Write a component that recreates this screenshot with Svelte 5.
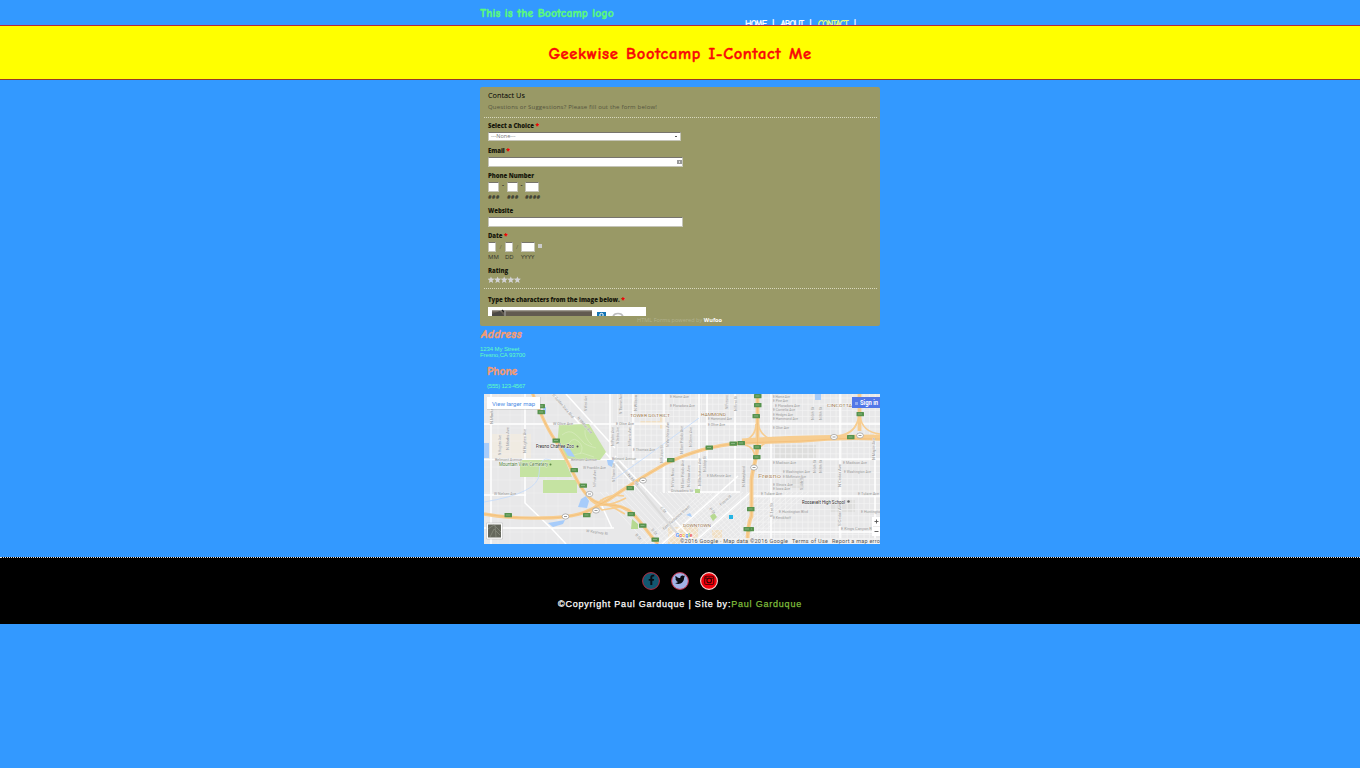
<script>
  // [x, y, text, width, rotation]
  const labels = [
    [553, 425, 'W Olive Ave', 20], [571, 460.5, 'Belmont Avenue', 26], [495, 461, 'Belmont Avenue', 27],
    [583, 469, 'W Franklin Ave', 23], [494, 495, 'W Nielsen Ave', 22], [586, 532, 'W Kearney Bl', 22, 8],
    [616, 425, 'E Olive Ave', 18], [670, 398, 'E Home Ave', 19], [670, 406.5, 'E Floradora Ave', 25],
    [633, 451, 'E Thomas Ave', 22], [612, 460, 'Belmont Avenue', 24], [708, 420, 'E Hammond Ave', 24],
    [708, 426, 'E Olive Ave', 17], [707, 477, 'E McKenzie Ave', 24], [671, 492, 'Divisadero St', 22],
    [773, 398, 'E Home Ave', 17], [773, 402, 'E Pine Ave', 15], [775, 407, 'E Floradora Ave', 25],
    [773, 411, 'E Cornelia Ave', 22], [773, 416, 'E Hedges Ave', 20], [773, 420, 'E Hammond Ave', 25],
    [773, 429, 'E Olive Ave', 16], [773, 464, 'E Madison Ave', 23], [783, 473, 'E Washington Ave', 27],
    [783, 477.5, 'E McKenzie Ave', 23], [773, 486, 'E Illinois Ave', 20], [773, 490, 'E Iowa Ave', 17],
    [761, 495, 'E Tulare Ave', 21], [843, 464, 'E Madison Ave', 24], [844, 473, 'E Washington Ave', 27],
    [858, 495, 'E Tulare Ave', 21], [779, 513, 'E Huntington Blvd', 29], [773, 519, 'E Kerckhoff', 18],
    [861, 513, 'E Huntington', 21], [841, 530, 'E Kings Canyon Rd', 33],
    [501, 455, 'N Hughes Ave', 20, -90], [509, 450, 'N Marks Ave', 23, -90], [526, 453, 'N Hughes Ave', 24, -90],
    [493, 424, 'N Marks', 16, -90], [552, 395, 'W Golden State Blvd', 31, 49], [577, 418, 'N Weber Ave', 21, 49],
    [587, 411, 'N West Ave', 15, -90], [614, 446, 'N Palm Ave', 19, -90], [596, 487, 'N Fruit Ave', 17, -90],
    [615, 482, 'N Thorne Ave', 19, -90], [622, 414, 'N Thorne Ave', 20, -90], [637, 411, 'N Wilson', 16, -90],
    [619, 444, 'N Delno Ave', 17, -90], [631, 446, 'N Farris Ave', 19, -90], [669, 447, 'N Van Ness Ave', 25, -90],
    [663, 463, 'N Fulton St', 18, -90], [683, 454, 'N San Pablo Ave', 28, -90], [692, 447, 'N Glenn Ave', 20, -90],
    [674, 487, 'N Van Ness', 19, -90], [684, 488, 'N San Pablo Ave', 28, -90], [690, 487, 'N Glenn Ave', 22, -90],
    [701, 486, 'N Blackstone Ave', 28, -90], [706, 472, 'N Abby St', 16, -90], [745, 487, 'N Maryland', 21, -90],
    [728, 409, 'N Fresno', 14, -90], [737, 411, 'N First St', 15, -90], [814, 420, 'N 6th St', 13, -90],
    [822, 420, 'N 8th St', 13, -90], [841, 487, 'N Cedar Ave', 23, -90], [841, 526, 'S Cedar Ave', 23, -90],
    [803, 490, 'S 4th St', 14, -90], [816, 473, 'N 6th St', 13, -90], [822, 473, 'N 8th St', 13, -90],
    [773, 517, 'S 1st St', 14, -90], [875, 460, 'N Maple Ave', 22, -90], [664, 530, 'East Tuolumne Street', 35, -41],
    [721, 506, 'Fresno St', 14, -41], [660, 508, 'C St', 7, 48], [651, 530, 'D St', 7, 48], [627, 475, 'N H St', 15, 47],
    [709, 509, 'P St', 7, 48], [635, 535, 'B St', 7, 48]
  ];
  // [x, y, text, width, colour, size]
  const places = [
    [630, 417, 'TOWER DISTRICT', 40, '#94734a', 4.3], [701, 415.7, 'HAMMOND', 25, '#94734a', 4.3],
    [827, 407, 'CINCOTTA', 25, '#94734a', 4.3], [683, 526.5, 'DOWNTOWN', 28, '#94734a', 4.3],
    [758, 478, 'Fresno', 23, '#b08f6a', 6], [536, 448, 'Fresno Chaffee Zoo', 38, '#222', 5],
    [499, 466, 'Mountain View Cemetery', 49, '#4c7a35', 5], [802, 503.5, 'Roosevelt High School', 43, '#222', 5]
  ];
  const exits = [[541,406],[541,412],[556,440.5],[574,470],[583,485.5],[508,515],[586.5,515],[630,488],[670.5,460],[709,447.5],[733,443.5],[741,443],[631,514],[642.5,525.5],[655,539.5],[757.5,396],[757.5,405],[756,416],[757,447],[756.5,457],[750.5,509],[750,529],[860,414],[850.5,437],[747,529]];
  const shields = [[589.5,494],[596,510.5],[565.5,516.5],[643,480.5],[834,437],[860,435.5],[754,467.5]];
  const range = (a, b, s) => Array.from({ length: Math.ceil((b - a) / s) }, (_, i) => a + i * s);
</script>

<div class="top"><div class="wrap bar">
  <div class="logo">This is the Bootcamp logo</div>
  <nav><a href="#home">HOME</a><i>|</i><a href="#about">ABOUT</a><i>|</i><a class="on" href="#contact">CONTACT</a><i>|</i></nav>
</div></div>
<div class="hero"><h1>Geekwise Bootcamp I-Contact Me</h1></div>

<main class="wrap">
  <form>
    <header><h2>Contact Us</h2><p>Questions or Suggestions? Please fill out the form below!</p></header>
    <div class="field"><label><span>Select a Choice</span> <b>*</b></label><div class="select"><span>---None---</span><em></em></div></div>
    <div class="field"><label><span>Email</span> <b>*</b></label><div class="input"><small></small></div></div>
    <div class="field phone"><label><span>Phone Number</span></label>
      <div class="parts"><div><u style="width:11px"></u><span>###</span></div><s>-</s><div><u style="width:11px"></u><span>###</span></div><s>-</s><div><u style="width:14px"></u><span>####</span></div></div></div>
    <div class="field"><label><span>Website</span></label><div class="input"></div></div>
    <div class="field date"><label><span>Date</span> <b>*</b></label>
      <div class="parts"><div><u style="width:8px"></u><span>MM</span></div><s>/</s><div><u style="width:8px"></u><span>DD</span></div><s>/</s><div><u style="width:14px"></u><span>YYYY</span></div><q></q></div></div>
    <div class="field rating"><label><span>Rating</span></label>
      <svg width="34" height="8" viewBox="0 0 34 8">{#each range(0, 5, 1) as n}<path transform="translate({n * 6.6} 0)" d="M3 .4l.9 2.200 2.600.2-2 1.700.7 2.600L3 5.700.8 7.100l.7-2.600-2-1.700 2.600-.2z" fill="#d3d3d5" />{/each}</svg></div>
    <div class="field verify"><label><span>Type the characters from the image below.</span> <b>*</b></label>
      <div class="captcha"><svg width="158" height="9" viewBox="0 0 158 9">
        <path d="M4 3.500h100V9H4z" fill="#625a50" /><path d="M4 3.500h100v1H4z" fill="#8c857a" /><path d="M12 4l4 5H4V7z" fill="#4b4844" /><path d="M14 3l2 2" stroke="#222" stroke-width="1.500" /><path d="M17 4v5" stroke="#aaa" />
        <path d="M109 5h9v4h-9z" fill="#1475b5" /><circle cx="113.500" cy="8" r="1.700" fill="none" stroke="#fff" /><path d="M125 10q.5-3.500 5-3.500t5 3.500" fill="none" stroke="#bcbcbc" stroke-width="1.700" />
      </svg></div></div>
    <div class="powered"><span>HTML Forms powered by</span> <strong>Wufoo</strong></div>
  </form>

  <section class="addr"><h3>Address</h3><p>1234 My Street<br />Fresno,CA 93700</p></section>
  <section class="tel"><h3>Phone</h3><p>(555) 123-4567</p></section>

  <svg class="map" width="396" height="150" viewBox="484 394 396 150" font-family="Roboto, sans-serif">
    <path d="M484 394h396v150H484z" fill="#e8e8e9" />
    <path d="M492 434h39v24h-39z" fill="#f0ebe2" /><path d="M668 527h30v17h-30zM640 421h25v4h-25zM660 417h5v12h-5zM712 530h10v14h-10z" fill="#f0dfc4" />
    <path d="M775 445h41v13h-41zM830 500h25v12h-25zM790 478h14v10h-14z" fill="#dededd" />
    <g stroke="#f5f5f5" stroke-width=".7" fill="none">
      {#each range(612, 880, 5.6) as x}<path d="M{x} 394v{x < 740 ? 98 : 150}" />{/each}
      {#each range(398, 544, 6.2) as y}<path d="M{y < 490 ? 617 : 752} {y}H880" />{/each}
      {#each range(498, 608, 12) as x}<path d="M{x} 394v150" opacity=".4" />{/each}
      {#each range(402, 544, 13) as y}<path d="M484 {y}h125" opacity=".4" />{/each}
      {#each range(640, 754, 5) as x}<path d="M{x} 544l58-52" />{/each}
      {#each range(600, 720, 6) as x}<path d="M{x} 492l48 52" />{/each}
    </g>
    <g stroke="#fff" stroke-width="1.500" fill="none">
      <path d="M491 394v150M484 424h128M484 459.500h132L880 459M484 495h42M525 394v109l27 26 14 15M610 394v70M612 424h268M633 394v70M664 394v99M699 394v98M707 394v66M735 394v98M771 394v150M840 394v150M875 434v110M484 528h130M752 496h128M752 532h128M668 492h72M612 528l-10-22M553 394l59 66 76 84M566 394l49 54M615 456l82 88M662 544l76-68M692 544l60-53" />
      <path d="M617 462l64 76" stroke="#dcdcdc" stroke-width="2.500" />
    </g>
    <path d="M559 425l30-1 17 28-6 8h-26l-8-2-9-12z" fill="#c5e3a2" /><path d="M520 460h45l7 17h-52zM543 480h34v13h-34z" fill="#c5e3a2" />
    <path d="M632 519l6 5v5h-7zM695 489h5v4h-5zM710 516l4-3 3 4-4 4z" fill="#b6d990" />
    <g fill="none" stroke="#dbedc4" stroke-width=".6"><path d="M562 435q7-6 13-1t8 8 13 6M566 450q5-15 12-9t2 13M585 430q-1 8 7 15M569 456l13-3 12 4" /></g>
    <path d="M484 443h5v15h-5zM543 407h3v7h-3zM562 446l8 3 5 8-7-1zM607 460h7l-2 7-4-2zM581 499l5-3 3 5-2 7-9-1zM548 523l17-3-2 4-10 3zM815 394h6v6h-6zM686 515l4-2 2 4z" fill="#a7ccfa" />
    <path d="M484 502q55-9 55-28t12-14M612 481l35-25 52-38" stroke="#c3dafb" stroke-width=".8" fill="none" />
    <g fill="none" stroke="#f7cd90" stroke-width="3.800" stroke-linejoin="round">
      <path d="M532 392c8 20 14 35 23 48s15 28 23 42 14 22 32 23 23 8 31 18 12 16 17 21" stroke-width="3.200" />
      <path d="M484 514q28 5 58 4c44 0 50-10 66-18q29-20 57-36 37-18 76-21l60-2q40-4 79-2" stroke-width="3.400" />
      <path d="M742 441q60-4 138-4" stroke-width="5" />
      <path d="M757.500 394v47c0 20-5 25-6 39v36q-4 8-4 28M859.500 394v37" />
      <path d="M742 442q14-5 14-18M772 440q-13-5-14-18M745 445q10 2 10 14M770 441q-13 4-13 15M838 436q18-2 21-20M880 434q-18-2-20-18M588 496q9 17 38 2M590 514q12-22 34-18M600 500l25 14M592 500l10 10 18-3 10 5" stroke-width="1.700" />
    </g>
    <g fill="none" stroke="#f0b76d" stroke-width=".5"><path d="M484 514q28 5 58 4c44 0 50-10 66-18q29-20 57-36 37-18 76-21l60-2q40-4 79-2M532 392c8 20 14 35 23 48s15 28 23 42 14 22 32 23 23 8 31 18 12 16 17 21M757.500 394v47c0 20-5 25-6 39v36q-4 8-4 28" /></g>
    {#each labels as [x, y, t, w, r]}<text {x} {y} textLength={w} lengthAdjust="spacingAndGlyphs" transform="rotate({r || 0} {x} {y})" font-size="3.800" fill="#999" stroke="#eee" stroke-width=".4" paint-order="stroke">{t}</text>{/each}
    {#each exits as [x, y]}<g><rect x={x - 3.5} y={y - 2} width="7.500" height="4.200" rx=".5" fill="#57934e" /><path d="M{x - 2} {y}h4" stroke="#8cb785" stroke-width=".9" /></g>{/each}
    {#each shields as [x, y]}<g><ellipse cx={x} cy={y} rx="3.400" ry="2.600" fill="#fff" stroke="#999" stroke-width=".7" /><path d="M{x - 1.5} {y}h3" stroke="#999" /></g>{/each}
    {#each places as [x, y, t, w, c, s]}<text {x} {y} textLength={w} lengthAdjust="spacingAndGlyphs" font-size={s} fill={c} stroke="#fff" stroke-width=".6" paint-order="stroke">{t}</text>{/each}
    <circle cx="577.500" cy="446.500" r="1" fill="#555" /><circle cx="550.500" cy="464.500" r="1" fill="#5c8844" /><circle cx="848.500" cy="501.500" r="1.200" fill="#666" />
    <path d="M729 515h4v4h-4z" fill="#25b4e4" />
    <g><rect x="487" y="397" width="54" height="13" fill="#999" opacity=".25" /><path d="M487 397h53v12h-53z" fill="#fff" /><text x="492" y="406" font-size="6" textLength="43" fill="#4d8de5">View larger map</text></g>
    <path d="M852 397h28v11h-28z" fill="#5277e8" /><path d="M855 402h3v3h-3z" fill="#8fa8ef" /><text x="860" y="404.500" font-size="6.500" font-weight="700" textLength="18" lengthAdjust="spacingAndGlyphs" fill="#fff">Sign in</text>
    <path d="M486.500 523h16v16h-16z" fill="#fff" stroke="#aaa" stroke-width=".4" /><path d="M488 524.500h13v13h-13z" fill="#65675c" /><path d="M488 529l6-4 7 7M490 537l4-8 6 6M495 525l1 12" stroke="#808376" fill="none" />
    <path d="M680 538h200v6H680z" fill="#f3f3f3" opacity=".75" />
    <text x="680" y="543" font-size="5.500" textLength="108" fill="#555">©2016 Google · Map data ©2016 Google</text><text x="792" y="543" font-size="5.500" textLength="36" fill="#555">Terms of Use</text><text x="832" y="543" font-size="5.500" textLength="50" fill="#555">Report a map error</text>
    <text x="675.500" y="536.500" font-size="5.500" textLength="17" font-weight="500" stroke="#fff" stroke-width=".7" paint-order="stroke"><tspan fill="#4285f4">G</tspan><tspan fill="#e94335">o</tspan><tspan fill="#efb305">o</tspan><tspan fill="#4285f4">g</tspan><tspan fill="#34a853">l</tspan><tspan fill="#e94335">e</tspan></text>
    <path d="M872 517h8v19h-8z" fill="#fff" /><path d="M874.500 521.500h4M876.500 519.500v4M874.500 531.500h4" stroke="#555" stroke-width=".9" /><path d="M873 526.500h7" stroke="#ddd" stroke-width=".6" />
  </svg>
</main>

<footer>
  <div class="social">
    <svg width="18" height="18" viewBox="0 0 18 18"><circle cx="9" cy="9" r="8.400" fill="#12566f" stroke="#b82c3f" stroke-width="1" /><path d="M8.300 13V8.800H6.700V6.900h1.600V5.500c0-1.800 1.100-2.700 2.700-2.700h1.200v1.800h-1c-.7 0-.9.400-.9.900v1.400h1.800L11.800 8.800h-1.500V13z" fill="#050c14" /></svg>
    <svg width="18" height="18" viewBox="0 0 18 18"><circle cx="9" cy="9" r="8.400" fill="#a2b3e6" stroke="#cb334b" stroke-width="1" /><path transform="translate(0 -.6)" d="M14.200 5l-1.100.3.9-1.100-1.300.5C11.300 3.500 9 4.500 9.300 6.700 7.400 6.600 5.800 5.700 4.700 4.300c-.7 1.100-.3 2.300.7 3l-1-.3c0 1.100.7 1.900 1.700 2.200H5.200c.3.900 1 1.400 2 1.500-.9.700-2 1-3.200.9 4 2.400 9.200.1 9.100-5.400z" fill="#080b13" /></svg>
    <svg width="18" height="18" viewBox="0 0 18 18"><circle cx="9" cy="9" r="8.400" fill="#f0000b" stroke="#fbd7d5" stroke-width="1.100" /><rect x="4.700" y="4.200" width="9" height="8.300" rx="1.500" fill="none" stroke="#5a0004" stroke-width="1.100" /><path d="M5 6.300h2M11 6.300h2.500M6 4v2" stroke="#5a0004" /><circle cx="9.200" cy="8.400" r="2.300" fill="none" stroke="#350003" stroke-width="1.100" /></svg>
  </div>
  <p><span>©Copyright Paul Garduque | Site by:</span><a href="#paul">Paul Garduque</a></p>
</footer>

<style>
  :global(body) { background: #39f; min-height: 768px; }
  h1, h2, h3, p { margin: 0; }
  a { color: inherit; text-decoration: none; }
  .wrap { width: 400px; margin: 0 auto; }
  .top { height: 25px; overflow: hidden; }
  .bar { display: flex; justify-content: space-between; }
  .logo, h1, h3, nav { font-family: "Comic Sans MS", "Comic Neue", Lato, cursive; font-weight: 700; white-space: nowrap; -webkit-text-stroke: .4px currentColor; }
  .logo { color: #5cfb78; font-size: 11.5px; line-height: 28px; letter-spacing: .2px; }
  nav { display: flex; width: 135px; padding-top: 17px; font-size: 9px; line-height: 15px; letter-spacing: -.8px; color: #fff; -webkit-text-stroke: .15px currentColor; }
  nav i { font-style: normal; margin: 0 7px 0 6px; }
  .on { color: #e6ff7d; }
  .hero { height: 53px; border-top: 1px solid #b52840; border-bottom: 1px solid #94382c; background: #ff0; text-align: center; }
  h1 { color: #f80808; font-size: 16.5px; line-height: 55px; letter-spacing: .6px; word-spacing: 1.2px; }
  form { box-sizing: border-box; height: 239px; margin-top: 7px; padding: 4px 0 0 8px; background: #996; border-radius: 2px; font: 6px/10px "Open Sans", sans-serif; color: #222; }
  form header { height: 26px; margin: 0 3px 3px -4px; padding-left: 4px; border-bottom: 1px dotted #d8d8bd; }
  h2 { font: 7.3px/9px "Open Sans", sans-serif; color: #000; }
  header p { line-height: 15px; letter-spacing: .19px; color: #54543f; }
  .field { height: 25px; white-space: nowrap; }
  label { display: block; height: 10px; line-height: 11px; font-weight: 800; font-size: 6px; letter-spacing: -.03px; color: #17170b; }
  label b { color: #e00; font-size: 7px; line-height: 6px; }
  .select, .input { box-sizing: border-box; background: #fff; border: 1px solid #c5c5b8; border-top-color: #77746c; display: flex; justify-content: space-between; align-items: center; }
  .select { width: 193px; height: 9px; margin-top: 1px; color: #777; padding: 0 3px 0 2px; font-size: 5.5px; line-height: 7px; }
  .select em { width: 2px; height: 1px; background: #555; }
  .input { width: 195px; height: 10px; margin-top: 1px; }
  .input small { width: 5px; height: 4px; border: 1px solid #999; border-width: 1px 2px; background: #ddd; margin-left: auto; box-sizing: border-box; }
  .phone, .date { height: 35px; }
  .parts { display: flex; margin-top: 1px; }
  .parts div { display: flex; flex-direction: column; }
  .parts u { box-sizing: border-box; display: block; height: 10px; background: #fff; border: 1px solid #c5c5b8; border-top-color: #77746c; }
  .parts span { font-size: 6px; line-height: 10px; color: #33332b; width: 0; }
  .phone .parts span { font-size: 5.7px; font-weight: 700; letter-spacing: .2px; }
  .parts s { text-decoration: none; width: 8px; text-align: center; line-height: 7px; font-weight: 700; }
  .phone .parts s:nth-of-type(2) { width: 7px; }
  .date .parts s { width: 9px; line-height: 10px; font-weight: 400; color: #66664a; }
  .date .parts s:nth-of-type(2) { width: 8px; }
  q { width: 4px; height: 4px; background: #ccc; margin: 2px 0 0 3px; }
  q::before, q::after { content: none; }
  .rating { height: 22px; margin-left: -4px; padding-left: 4px; margin-right: 3px; border-bottom: 1px dotted #d8d8bd; }
  .rating svg { display: block; }
  .verify { padding-top: 6px; height: 22px; }
  .captcha { margin-top: 2px; width: 158px; height: 9px; background: #fff; overflow: hidden; }
  .captcha svg { display: block; }
  .powered { font-size: 5.6px; line-height: 8px; width: 234px; text-align: right; color: #b1b18d; white-space: nowrap; margin-top: -1px; }
  .powered strong { color: #fff; }
  h3 { color: #f99b6d; font-size: 11.5px; line-height: 15px; letter-spacing: .12px; }
  section { color: #60ffbf; font: 6px/6px "Liberation Sans", sans-serif; letter-spacing: -.1px; }
  .addr { height: 37px; padding-top: 1px; box-sizing: border-box; }
  .addr h3 { font-style: italic; margin-left: 1px; line-height: 16px; letter-spacing: .4px; }
  .addr p { margin-top: 3px; }
  .tel { height: 31px; padding-left: 7px; }
  .tel h3 { line-height: 17px; letter-spacing: 0; }
  .tel p { margin-top: 3px; letter-spacing: -.2px; }
  .map { display: block; margin-left: 4px; }
  footer { box-sizing: border-box; height: 67px; margin-top: 13px; background: #000; border-top: 1px dotted #ddd; padding-top: 14px; color: #fff; }
  .social { display: flex; justify-content: center; gap: 11px; height: 18px; }
  footer p { text-align: center; font: 9px/14px "Liberation Sans", sans-serif; letter-spacing: .79px; margin-top: 7px; white-space: nowrap; -webkit-text-stroke: .25px currentColor; }
  footer a { color: #7fbd3c; }
</style>
